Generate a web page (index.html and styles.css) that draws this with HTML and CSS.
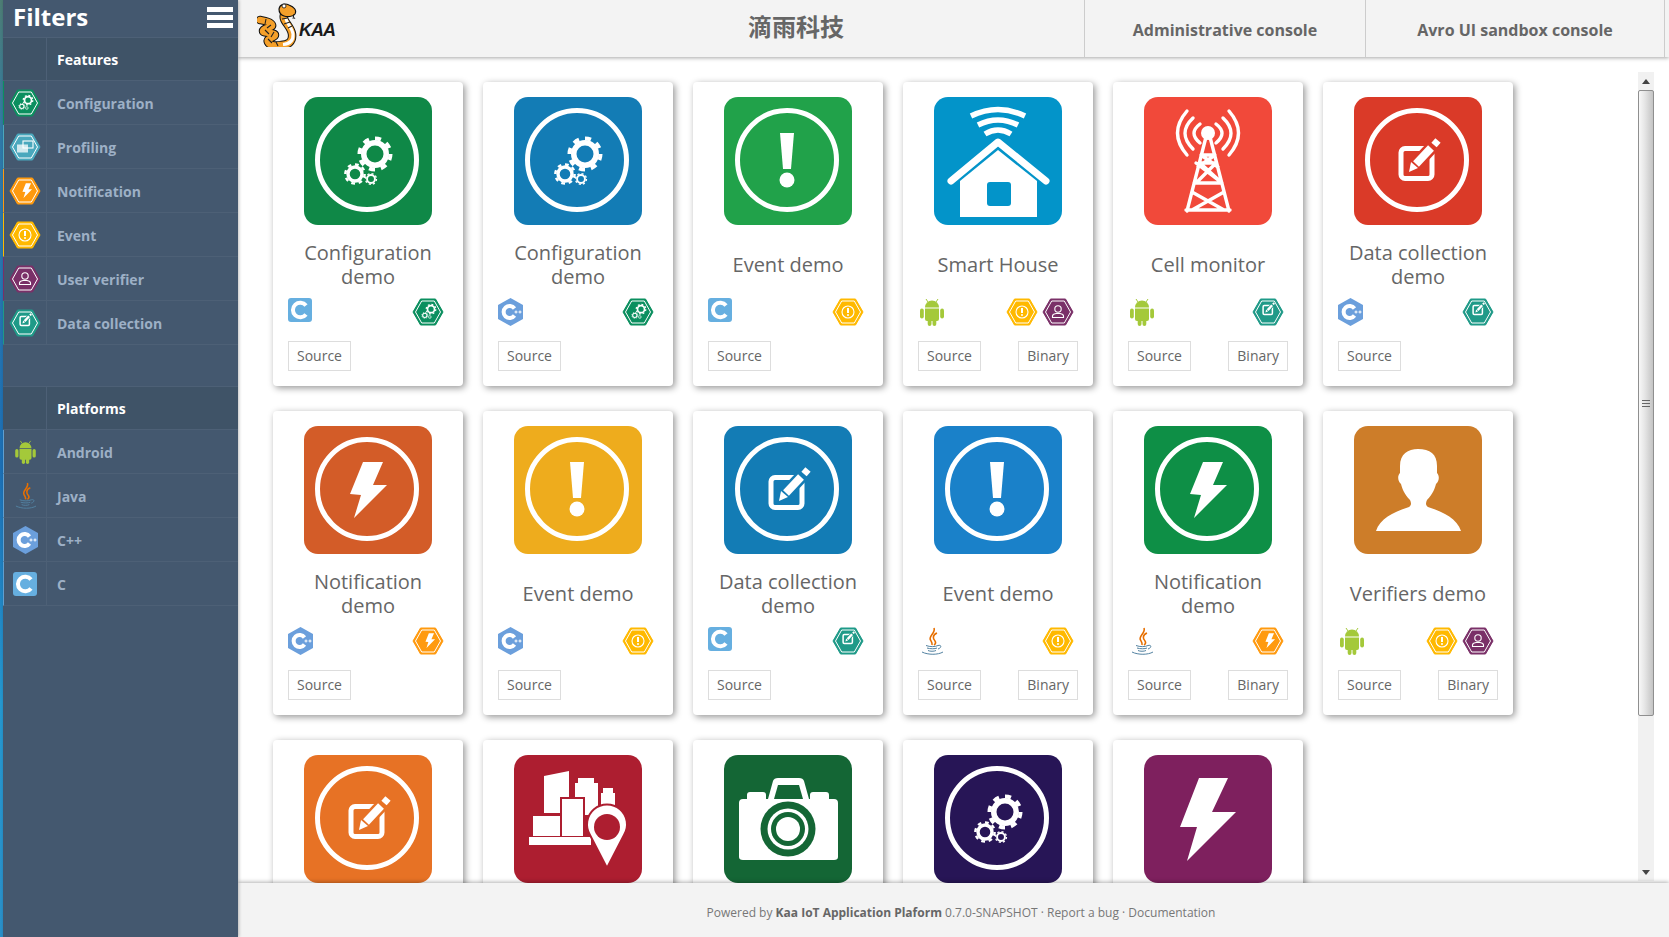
FILE: index.html
```html
<!DOCTYPE html>
<html lang="en">
<head>
<meta charset="utf-8">
<title>Kaa Sandbox</title>
<link rel="stylesheet" href="styles.css">
</head>
<body>
<svg class="defs" aria-hidden="true">
  <defs>
    <circle id="ring" class="st ring" cx="63" cy="63" r="49.500"/>
    <g id="gear">
      <circle class="st gear-body" r="11.250"/>
      <circle class="st gear-teeth" r="15.500" pathLength="16"/>
    </g>
    <g id="gears">
      <use href="#gear" transform="translate(71 57)"/>
      <use href="#gear" transform="translate(51 77) scale(.62)"/>
      <use href="#gear" transform="translate(67 82) scale(.35)"/>
    </g>
    <g id="edit">
      <rect class="st edit-box" x="47" y="51.500" width="31" height="30" rx="4"/>
      <path class="halo" d="M60 69 L80 48"/>
      <path class="st pencil" d="M62 67 L77 51"/>
      <path class="st pencil-end" d="M80 48 L84 43.500"/>
      <path class="fl" d="M55 75 L57 65 L64 71 Z"/>
    </g>
    <g id="bang">
      <path class="fl" d="M56 36 H70 L67 72 H59 Z"/>
      <circle class="fl" cx="63" cy="83" r="7.500"/>
    </g>
    <path id="bolt" class="fl" d="M59 36 H79 L69 59 H83 L50 92 L57 69 L46 68 Z"/>
    <path id="bigbolt" class="fl" d="M55 23 H84 L68 57 H92 L43 106 L53 72 H36 Z"/>
    <g id="house">
      <path class="st wave" d="M37 19 Q64 6 91 19"/>
      <path class="st wave" d="M44 28 Q64 18 84 28"/>
      <path class="st wave" d="M51 37 Q64 29 77 37"/>
      <path class="st roof" d="M17 84 L64 45 L112 84"/>
      <path class="fl" d="M26 120 V84 L64 53 L103 84 V120 Z"/>
      <rect class="cur" x="53" y="85" width="24" height="24" rx="3"/>
    </g>
    <g id="tower">
      <circle class="fl" cx="64" cy="36" r="7"/>
      <path class="st tower-line" d="M62 40 L43 114 M66 40 L85 114 M42 113 H86 M48 95 L80 113 M80 95 L48 113 M50 86 H78 L52 66 M78 86 L56 66 H72 L52 86 M57 58 H71 L54 70 M57 58 L74 70"/>
      <path class="st wave-thin" d="M43 14 Q24 36 43 58 M49 21 Q33 36 49 52 M56 27 Q44 36 56 46 M85 14 Q104 36 85 58 M79 21 Q95 36 79 52 M72 27 Q84 36 72 46"/>
    </g>
    <path id="person" class="fl" d="M22 105 C26 92 42 85 55 81 C58 79 57 76 56 74 C50 68 48 62 47 58 C44 56 43 50 46 47 L46 40 C46 28 54 23 64 23 C76 23 83 28 83 40 L83 47 C86 50 85 56 82 58 C81 62 79 68 73 74 C72 76 71 79 74 81 C87 85 103 92 107 105 Z"/>
    <g id="city">
      <path class="fl" d="M30 21 L55 16 V58 H30 Z"/>
      <path class="fl" d="M61 28 H64 V23 H80 V28 H84 V60 H61 Z"/>
      <path class="fl" d="M87 38 H89 V33 H99 V38 H101 V52 H87 Z"/>
      <rect class="fl front" x="47" y="43" width="23" height="39"/>
      <path class="fl" d="M19 61 H46 V81 H19 Z"/>
      <rect class="fl" x="15" y="82" width="62" height="8"/>
      <path class="fl pin" d="M93 113 L76 80 A20 20 0 1 1 110 80 Z"/>
      <circle class="cur" cx="93" cy="72" r="13"/>
    </g>
    <g id="camera">
      <path class="fl" d="M15 48 Q15 44 19 44 H23 V40 Q23 37 26 37 H39 Q42 37 42 40 V44 H44 L49 26 Q50 23 54 23 H75 Q79 23 80 26 L85 44 H86 V40 Q86 37 89 37 H102 Q105 37 105 40 V44 H110 Q114 44 114 48 V102 Q114 105 110 105 H19 Q15 105 15 102 Z"/>
      <path class="cur" d="M54 30 H75 L79 44 H50 Z"/>
      <circle class="cur" cx="64" cy="74" r="27.500"/>
      <circle class="fl" cx="64" cy="74" r="20.500"/>
      <circle class="cur" cx="64" cy="74" r="17"/>
      <circle class="fl" cx="64" cy="74" r="12"/>
    </g>

    <g id="hex-frame">
      <path class="cur hex-out" d="M1 14 L8.500 1 H23.500 L31 14 L23.500 27 H8.500 Z"/>
      <path class="st hex-in" d="M3.500 14 L9.700 3 H22.300 L28.500 14 L22.300 25 H9.700 Z"/>
    </g>
    <g id="hex-config">
      <use href="#hex-frame"/>
      <use href="#gears" transform="translate(-3 -6.500) scale(.31)"/>
    </g>
    <g id="hex-profile">
      <use href="#hex-frame"/>
      <rect class="fl dim" x="8" y="11.500" width="11" height="8"/>
      <rect class="st hex-line" x="14" y="8" width="10" height="7"/>
    </g>
    <g id="hex-notify">
      <use href="#hex-frame"/>
      <use href="#bolt" transform="translate(1.500 -3) scale(.26)"/>
    </g>
    <g id="hex-event">
      <use href="#hex-frame"/>
      <circle class="st hex-line" cx="16" cy="14" r="6"/>
      <path class="fl" d="M15 10 H17 V15 H15 Z"/>
      <circle class="fl" cx="16" cy="17" r="1"/>
    </g>
    <g id="hex-user">
      <use href="#hex-frame"/>
      <circle class="st hex-line" cx="16" cy="11" r="3.200"/>
      <path class="st hex-line" d="M10.500 19.500 V18 Q10.500 16 14 15.500 H18 Q21.500 16 21.500 18 V19.500 Z"/>
    </g>
    <g id="hex-data">
      <use href="#hex-frame"/>
      <use href="#edit" transform="translate(-3 -8) scale(.3)"/>
    </g>

    <g id="android">
      <path class="droid" d="M5 9.500 A7 7 0 0 1 19 9.500 Z"/>
      <path class="droid-line" d="M8 4 L6 1 M16 4 L18 1"/>
      <path class="droid" d="M5 10.500 H19 V21 Q19 23 17 23 H7 Q5 23 5 21 Z"/>
      <rect class="droid" x="0" y="10.500" width="3.800" height="10" rx="1.900"/>
      <rect class="droid" x="20.200" y="10.500" width="3.800" height="10" rx="1.900"/>
      <rect class="droid" x="7.700" y="21" width="3.800" height="7" rx="1.900"/>
      <rect class="droid" x="12.500" y="21" width="3.800" height="7" rx="1.900"/>
    </g>
    <g id="java">
      <path class="flame" d="M14 1 C16 6 8 9 10.500 13 C11.500 15 12.500 16 12 18"/>
      <path class="flame" d="M17 6 C12 8 13 12 15 14 C16 15.500 15.500 17 14 18"/>
      <path class="cup" d="M6 18.500 C10 20 15 20 18 18.500 M7 21 C10 22 15 22 17 21 M8 23.500 C10 24.500 14 24.500 16 23.500 M2 25 C8 28 18 28 23 25 M18 18.500 C22 17.500 21.500 21 18 22"/>
    </g>
    <g id="lang-c">
      <rect class="lang-c-bg" width="24" height="24" rx="3"/>
      <path class="st lang-stroke" d="M18 7.500 A7.300 7.300 0 1 0 18 16.500"/>
    </g>
    <g id="lang-cpp">
      <path class="lang-cpp-bg" d="M12.500 0 L25 7 V21 L12.500 28 L0 21 V7 Z"/>
      <path class="st lang-stroke" d="M16.500 10.500 A6 6 0 1 0 16.500 17.500"/>
      <path class="st plus" d="M16.500 14 H19.500 M18 12.500 V15.500 M20.500 14 H23.500 M22 12.500 V15.500"/>
    </g>
  </defs>
</svg>

<div class="app">
  <div class="strip"></div>
  <aside class="sidebar">
    <div class="filters-head">
      <span class="filters-title">Filters</span>
      <span class="burger"><i></i><i></i><i></i></span>
    </div>
    <div class="group-head"><span class="cell-icon"></span><span class="group-label">Features</span></div>
    <div class="row edge-config"><span class="cell-icon"><svg class="hex hue-config" viewBox="0 0 32 28"><use href="#hex-config"/></svg></span><span class="row-label">Configuration</span></div>
    <div class="row edge-profile"><span class="cell-icon"><svg class="hex hue-profile" viewBox="0 0 32 28"><use href="#hex-profile"/></svg></span><span class="row-label">Profiling</span></div>
    <div class="row edge-notify"><span class="cell-icon"><svg class="hex hue-notify" viewBox="0 0 32 28"><use href="#hex-notify"/></svg></span><span class="row-label">Notification</span></div>
    <div class="row edge-event"><span class="cell-icon"><svg class="hex hue-event" viewBox="0 0 32 28"><use href="#hex-event"/></svg></span><span class="row-label">Event</span></div>
    <div class="row edge-user"><span class="cell-icon"><svg class="hex hue-user" viewBox="0 0 32 28"><use href="#hex-user"/></svg></span><span class="row-label">User verifier</span></div>
    <div class="row edge-data"><span class="cell-icon"><svg class="hex hue-data" viewBox="0 0 32 28"><use href="#hex-data"/></svg></span><span class="row-label">Data collection</span></div>
    <div class="group-gap"></div>
    <div class="group-head"><span class="cell-icon"></span><span class="group-label">Platforms</span></div>
    <div class="row edge-android"><span class="cell-icon"><svg class="side-android" viewBox="0 0 24 28"><use href="#android"/></svg></span><span class="row-label">Android</span></div>
    <div class="row edge-java"><span class="cell-icon"><svg class="side-java" viewBox="0 0 24 28"><use href="#java"/></svg></span><span class="row-label">Java</span></div>
    <div class="row edge-cpp"><span class="cell-icon"><svg class="ic-cpp" viewBox="0 0 25 28"><use href="#lang-cpp"/></svg></span><span class="row-label">C++</span></div>
    <div class="row edge-c"><span class="cell-icon"><svg class="ic-c" viewBox="0 0 24 24"><use href="#lang-c"/></svg></span><span class="row-label">C</span></div>
  </aside>

  <div class="main">
    <header class="topbar">
      <div class="brand">
        <svg class="snake" viewBox="0 0 40 46">
          <path class="sn-o" d="M3 19 C8 20 14 21 15 24 C16 27 6 26 6 30 C6 33 18 31 18 34 C18 37 9 37 11 41 C13 45 20 45 24 44 C31 44 36 41 35 33 C34 25 25 20 27 14"/>
          <path class="sn-i" d="M3 19 C8 20 14 21 15 24 C16 27 6 26 6 30 C6 33 18 31 18 34 C18 37 9 37 11 41 C13 45 20 45 24 44 C31 44 36 41 35 33 C34 25 25 20 27 14"/>
          <path class="sn-b" d="M26 43.500 C32 43 36.500 40 36 33 C35 26 29 22 29 17"/>
          <path class="sn-s" d="M9 18 L8 23 M14 24 L10 27 M8 29 L12 33 M17 31 L14 36 M11 38 L15 42 M19 41 L21 45 M25 18 L31 17 M27 23 L33 21 M31 27 L35 25"/>
          <path class="sn-h" d="M22 8 C23 3 28 2 32 4 C37 6 40 9 38 13 C36 16 30 16 27 15 C24 14 22 12 22 8 Z"/>
          <circle class="sn-e" cx="27" cy="5" r="2"/>
          <path class="sn-t" d="M37 13 L36 18 M36 15 L38 18"/>
        </svg>
        <span class="kaa">KAA</span>
      </div>
      <div class="company">滴雨科技</div>
      <a class="nav nav-admin">Administrative console</a>
      <a class="nav nav-avro">Avro UI sandbox console</a>
    </header>

    <div class="pane">
      <div class="cards">

        <article class="card">
          <div class="tile t-forest"><svg class="tile-svg" viewBox="0 0 128 128"><use href="#ring"/><use href="#gears"/></svg></div>
          <h3 class="title">Configuration demo</h3>
          <div class="badges"><svg class="ic-c" viewBox="0 0 24 24"><use href="#lang-c"/></svg><span class="hexes"><svg class="hex hue-config" viewBox="0 0 32 28"><use href="#hex-config"/></svg></span></div>
          <div class="actions"><a class="btn">Source</a></div>
        </article>

        <article class="card">
          <div class="tile t-ocean"><svg class="tile-svg" viewBox="0 0 128 128"><use href="#ring"/><use href="#gears"/></svg></div>
          <h3 class="title">Configuration demo</h3>
          <div class="badges"><svg class="ic-cpp" viewBox="0 0 25 28"><use href="#lang-cpp"/></svg><span class="hexes"><svg class="hex hue-config" viewBox="0 0 32 28"><use href="#hex-config"/></svg></span></div>
          <div class="actions"><a class="btn">Source</a></div>
        </article>

        <article class="card">
          <div class="tile t-grass"><svg class="tile-svg" viewBox="0 0 128 128"><use href="#ring"/><use href="#bang"/></svg></div>
          <h3 class="title">Event demo</h3>
          <div class="badges"><svg class="ic-c" viewBox="0 0 24 24"><use href="#lang-c"/></svg><span class="hexes"><svg class="hex hue-event" viewBox="0 0 32 28"><use href="#hex-event"/></svg></span></div>
          <div class="actions"><a class="btn">Source</a></div>
        </article>

        <article class="card">
          <div class="tile t-sky"><svg class="tile-svg" viewBox="0 0 128 128"><use href="#house"/></svg></div>
          <h3 class="title">Smart House</h3>
          <div class="badges"><svg class="ic-android" viewBox="0 0 24 28"><use href="#android"/></svg><span class="hexes"><svg class="hex hue-event" viewBox="0 0 32 28"><use href="#hex-event"/></svg><svg class="hex hue-user" viewBox="0 0 32 28"><use href="#hex-user"/></svg></span></div>
          <div class="actions"><a class="btn">Source</a><a class="btn">Binary</a></div>
        </article>

        <article class="card">
          <div class="tile t-coral"><svg class="tile-svg" viewBox="0 0 128 128"><use href="#tower"/></svg></div>
          <h3 class="title">Cell monitor</h3>
          <div class="badges"><svg class="ic-android" viewBox="0 0 24 28"><use href="#android"/></svg><span class="hexes"><svg class="hex hue-data" viewBox="0 0 32 28"><use href="#hex-data"/></svg></span></div>
          <div class="actions"><a class="btn">Source</a><a class="btn">Binary</a></div>
        </article>

        <article class="card">
          <div class="tile t-red"><svg class="tile-svg" viewBox="0 0 128 128"><use href="#ring"/><use href="#edit"/></svg></div>
          <h3 class="title">Data collection demo</h3>
          <div class="badges"><svg class="ic-cpp" viewBox="0 0 25 28"><use href="#lang-cpp"/></svg><span class="hexes"><svg class="hex hue-data" viewBox="0 0 32 28"><use href="#hex-data"/></svg></span></div>
          <div class="actions"><a class="btn">Source</a></div>
        </article>

        <article class="card">
          <div class="tile t-rust"><svg class="tile-svg" viewBox="0 0 128 128"><use href="#ring"/><use href="#bolt"/></svg></div>
          <h3 class="title">Notification demo</h3>
          <div class="badges"><svg class="ic-cpp" viewBox="0 0 25 28"><use href="#lang-cpp"/></svg><span class="hexes"><svg class="hex hue-notify" viewBox="0 0 32 28"><use href="#hex-notify"/></svg></span></div>
          <div class="actions"><a class="btn">Source</a></div>
        </article>

        <article class="card">
          <div class="tile t-amber"><svg class="tile-svg" viewBox="0 0 128 128"><use href="#ring"/><use href="#bang"/></svg></div>
          <h3 class="title">Event demo</h3>
          <div class="badges"><svg class="ic-cpp" viewBox="0 0 25 28"><use href="#lang-cpp"/></svg><span class="hexes"><svg class="hex hue-event" viewBox="0 0 32 28"><use href="#hex-event"/></svg></span></div>
          <div class="actions"><a class="btn">Source</a></div>
        </article>

        <article class="card">
          <div class="tile t-ocean"><svg class="tile-svg" viewBox="0 0 128 128"><use href="#ring"/><use href="#edit"/></svg></div>
          <h3 class="title">Data collection demo</h3>
          <div class="badges"><svg class="ic-c" viewBox="0 0 24 24"><use href="#lang-c"/></svg><span class="hexes"><svg class="hex hue-data" viewBox="0 0 32 28"><use href="#hex-data"/></svg></span></div>
          <div class="actions"><a class="btn">Source</a></div>
        </article>

        <article class="card">
          <div class="tile t-azure"><svg class="tile-svg" viewBox="0 0 128 128"><use href="#ring"/><use href="#bang"/></svg></div>
          <h3 class="title">Event demo</h3>
          <div class="badges"><svg class="ic-java" viewBox="0 0 24 28"><use href="#java"/></svg><span class="hexes"><svg class="hex hue-event" viewBox="0 0 32 28"><use href="#hex-event"/></svg></span></div>
          <div class="actions"><a class="btn">Source</a><a class="btn">Binary</a></div>
        </article>

        <article class="card">
          <div class="tile t-emerald"><svg class="tile-svg" viewBox="0 0 128 128"><use href="#ring"/><use href="#bolt"/></svg></div>
          <h3 class="title">Notification demo</h3>
          <div class="badges"><svg class="ic-java" viewBox="0 0 24 28"><use href="#java"/></svg><span class="hexes"><svg class="hex hue-notify" viewBox="0 0 32 28"><use href="#hex-notify"/></svg></span></div>
          <div class="actions"><a class="btn">Source</a><a class="btn">Binary</a></div>
        </article>

        <article class="card">
          <div class="tile t-ochre"><svg class="tile-svg" viewBox="0 0 128 128"><use href="#person"/></svg></div>
          <h3 class="title">Verifiers demo</h3>
          <div class="badges"><svg class="ic-android" viewBox="0 0 24 28"><use href="#android"/></svg><span class="hexes"><svg class="hex hue-event" viewBox="0 0 32 28"><use href="#hex-event"/></svg><svg class="hex hue-user" viewBox="0 0 32 28"><use href="#hex-user"/></svg></span></div>
          <div class="actions"><a class="btn">Source</a><a class="btn">Binary</a></div>
        </article>

        <article class="card">
          <div class="tile t-orange"><svg class="tile-svg" viewBox="0 0 128 128"><use href="#ring"/><use href="#edit"/></svg></div>
        </article>
        <article class="card">
          <div class="tile t-crimson"><svg class="tile-svg" viewBox="0 0 128 128"><use href="#city"/></svg></div>
        </article>
        <article class="card">
          <div class="tile t-pine"><svg class="tile-svg" viewBox="0 0 128 128"><use href="#camera"/></svg></div>
        </article>
        <article class="card">
          <div class="tile t-indigo"><svg class="tile-svg" viewBox="0 0 128 128"><use href="#ring"/><use href="#gears"/></svg></div>
        </article>
        <article class="card">
          <div class="tile t-plum"><svg class="tile-svg" viewBox="0 0 128 128"><use href="#bigbolt"/></svg></div>
        </article>

      </div>
      <div class="scrollbar">
        <div class="sb-btn"><span class="arrow-up"></span></div>
        <div class="sb-thumb"><span class="grip"></span></div>
        <div class="sb-rest"></div>
        <div class="sb-btn"><span class="arrow-down"></span></div>
      </div>
    </div>

    <footer class="footer">
      <span>Powered by <b>Kaa IoT Application Plaform</b> 0.7.0-SNAPSHOT · Report a bug · Documentation</span>
    </footer>
  </div>
</div>
</body>
</html>
```

FILE: styles.css
```css
* { box-sizing: border-box; }
html, body { margin: 0; height: 100%; }
body {
  overflow: hidden;
  background: #fff;
  font-family: "Open Sans", "Noto Sans", sans-serif;
  color: #666;
}
.defs { display: none; }
svg { display: block; flex: none; }

/* svg paint helpers */
.st { fill: none; stroke: #fff; }
.fl { fill: #fff; }
.cur { fill: currentColor; }
.dim { opacity: .75; }
.ring { stroke-width: 5; }
.gear-body { stroke-width: 5.5; }
.gear-teeth { stroke-width: 4; stroke-dasharray: 1 1; }
.edit-box { stroke-width: 5; }
.halo { fill: none; stroke: currentColor; stroke-width: 13; }
.pencil { stroke-width: 8; }
.pencil-end { stroke-width: 7; }
.wave { stroke-width: 5.5; }
.roof { stroke-width: 7; stroke-linecap: round; stroke-linejoin: round; }
.tower-line { stroke-width: 3.4; stroke-linejoin: round; stroke-linecap: round; }
.wave-thin { stroke-width: 3.4; stroke-linecap: round; }
.pin { stroke: currentColor; stroke-width: 2; }
.front { stroke: currentColor; stroke-width: 2; }
.hex-out { stroke: currentColor; stroke-width: 1; }
.hex-in { stroke-width: 1; }
.hex-line { stroke-width: 1.1; }
.droid { fill: #a4c93a; }
.droid-line { fill: none; stroke: #a4c93a; stroke-width: 1; }
.flame { fill: none; stroke: #e76f00; stroke-width: 1.6; }
.cup { fill: none; stroke: #5382a1; stroke-width: 1; }
.lang-c-bg { fill: #66afe0; }
.lang-cpp-bg { fill: #6b9fdc; }
.lang-stroke { stroke-width: 4; }
.plus { stroke-width: 1; }

/* layout */
.app { display: flex; height: 937px; }
.strip {
  width: 3px;
  flex: none;
  background: linear-gradient(#4d7d74 0, #2f79a8 15%, #1c6fb5 50%, #2597cf 75%, #2a8fc8 100%);
}
.sidebar {
  width: 235px;
  flex: none;
  background: #44586f;
  position: relative;
  z-index: 3;
  box-shadow: 1px 0 3px rgba(0, 0, 0, .25);
}
.filters-head {
  height: 37px;
  display: flex;
  align-items: center;
  justify-content: space-between;
  padding: 0 5px 0 10px;
  background: #44586f;
}
.filters-title { font-size: 24px; font-weight: 700; color: #fff; line-height: 34px; margin-top: -3px; }
.burger { display: flex; flex-direction: column; gap: 3px; width: 26px; margin-top: -2px; }
.burger i { display: block; height: 5px; background: #fff; }
.group-head {
  height: 44px;
  display: flex;
  align-items: center;
  background: #3f5367;
  border-top: 1px solid #4d6076;
  border-bottom: 1px solid #4d6076;
}
.group-gap { height: 41px; }
.group-label { font-size: 14px; font-weight: 700; color: #fff; padding-left: 10px; }
.row {
  height: 44px;
  display: flex;
  align-items: center;
  border-bottom: 1px solid #4d6076;
  border-left: 1px solid transparent;
}
.cell-icon {
  width: 44px;
  height: 100%;
  flex: none;
  display: flex;
  align-items: center;
  justify-content: center;
  border-right: 1px solid #4d6076;
}
.row .cell-icon { width: 43px; }
.row-label { font-size: 14px; font-weight: 700; color: #9db0c6; padding: 2px 0 0 10px; }
.edge-config { border-left-color: #0b8f5f; }
.edge-profile { border-left-color: #4aa8bd; }
.edge-notify { border-left-color: #ff9a0f; }
.edge-event { border-left-color: #ffb900; }
.edge-user { border-left-color: #7a3068; }
.edge-data { border-left-color: #1f9a88; }
.edge-android, .edge-java, .edge-cpp, .edge-c { border-left-color: #5f9fd0; }

.hex { width: 32px; height: 28px; }
.hue-config { color: #0b8f5f; }
.hue-profile { color: #4aa8bd; }
.hue-notify { color: #ff9a0f; }
.hue-event { color: #ffb900; }
.hue-user { color: #7a3068; }
.hue-data { color: #1f9a88; }
.ic-c { width: 24px; height: 24px; }
.ic-cpp { width: 25px; height: 28px; }
.ic-android { width: 24px; height: 28px; margin-left: 2px; }
.ic-java { width: 24px; height: 28px; margin-left: 2px; }
.side-android { width: 21px; height: 24px; }
.side-java { width: 23px; height: 27px; }

.main { flex: 1; min-width: 0; display: flex; flex-direction: column; }
.topbar {
  height: 57px;
  flex: none;
  display: flex;
  align-items: stretch;
  background: #f3f3f3;
  position: relative;
  z-index: 2;
  box-shadow: 0 1px 4px rgba(0, 0, 0, .35);
  padding-right: 4px;
}
.brand { width: 270px; flex: none; display: flex; align-items: flex-start; padding: 1px 0 0 19px; }
.snake { width: 40px; height: 46px; }
.snake path, .snake circle { fill: none; }
.snake .sn-o { stroke: #111; stroke-width: 8.5; stroke-linecap: round; stroke-linejoin: round; }
.snake .sn-i { stroke: #f5a02a; stroke-width: 6.5; stroke-linecap: round; stroke-linejoin: round; }
.snake .sn-b { stroke: #fff; stroke-width: 3; }
.snake .sn-s { stroke: #222; stroke-width: 1.1; }
.snake .sn-h { fill: #f5a02a; stroke: #111; stroke-width: 1.2; }
.snake .sn-e { fill: #fff; stroke: #111; stroke-width: .8; }
.snake .sn-t { stroke: #111; stroke-width: .8; }
.kaa {
  font-family: "Liberation Sans", sans-serif;
  font-size: 18px;
  font-style: italic;
  font-weight: 700;
  color: #1a1a1a;
  margin: 19px 0 0 2px;
  line-height: 20px;
  letter-spacing: -1px;
}
.company {
  flex: 1;
  display: flex;
  align-items: center;
  justify-content: center;
  padding-bottom: 6px;
  font-family: "Noto Sans CJK SC", "Open Sans", sans-serif;
  font-size: 24px;
  font-weight: 700;
  color: #666;
}
.nav {
  display: flex;
  align-items: center;
  justify-content: center;
  flex: none;
  font-size: 16px;
  font-weight: 700;
  color: #666;
  border-left: 1px solid #ccc;
  padding-top: 3px;
}
.nav-admin { width: 281px; }
.nav-avro { width: 300px; border-right: 1px solid #ccc; }

.pane { flex: 1; min-height: 0; display: flex; overflow: hidden; }
.cards {
  flex: 1;
  min-width: 0;
  display: grid;
  grid-template-columns: repeat(6, 190px);
  grid-auto-rows: 304px;
  gap: 25px 20px;
  padding: 25px 0 0 35px;
  overflow: hidden;
}
.card {
  background: #fff;
  border-radius: 4px;
  box-shadow: 2px 2px 7px rgba(0, 0, 0, .42);
  padding: 15px;
  display: flex;
  flex-direction: column;
}
.tile {
  width: 128px;
  height: 128px;
  flex: none;
  margin: 0 auto;
  border-radius: 14px;
}
.tile-svg { width: 128px; height: 128px; }
.t-forest { background: #0f8847; color: #0f8847; }
.t-ocean { background: #137cb5; color: #137cb5; }
.t-grass { background: #21a24a; color: #21a24a; }
.t-sky { background: #0394c9; color: #0394c9; }
.t-coral { background: #f1493a; color: #f1493a; }
.t-red { background: #da3a28; color: #da3a28; }
.t-rust { background: #d35c28; color: #d35c28; }
.t-amber { background: #eeac1d; color: #eeac1d; }
.t-azure { background: #1a81c9; color: #1a81c9; }
.t-emerald { background: #0e8f46; color: #0e8f46; }
.t-ochre { background: #cd7d29; color: #cd7d29; }
.t-orange { background: #e77225; color: #e77225; }
.t-crimson { background: #ad1e30; color: #ad1e30; }
.t-pine { background: #146635; color: #146635; }
.t-indigo { background: #271556; color: #271556; }
.t-plum { background: #7e205e; color: #7e205e; }

.title {
  height: 48px;
  margin: 16px 0 0;
  flex: none;
  display: flex;
  align-items: center;
  justify-content: center;
  text-align: center;
  font-size: 20px;
  line-height: 24px;
  font-weight: 400;
  color: #666;
}
.badges {
  height: 28px;
  margin-top: 9px;
  flex: none;
  display: flex;
  align-items: flex-start;
  justify-content: space-between;
  padding-right: 4px;
}
.hexes { display: flex; gap: 4px; }
.actions {
  margin-top: 15px;
  flex: none;
  display: flex;
  justify-content: space-between;
}
.btn {
  height: 30px;
  padding: 0 8px 2px;
  display: flex;
  align-items: center;
  border: 1px solid #ddd;
  font-size: 14px;
  color: #666;
  background: #fff;
}

.scrollbar {
  width: 16px;
  flex: none;
  margin: 15px 15px 2px 0;
  display: flex;
  flex-direction: column;
  background: #f1f1f1;
}
.sb-btn { height: 18px; flex: none; display: flex; align-items: center; justify-content: center; }
.arrow-up { border: 4px solid transparent; border-top: 0; border-bottom: 5px solid #444; }
.arrow-down { border: 4px solid transparent; border-bottom: 0; border-top: 5px solid #444; }
.sb-thumb {
  height: 626px;
  flex: none;
  border: 1px solid #8f8f8f;
  border-radius: 2px;
  background: linear-gradient(90deg, #f8f8f8, #e6e6e6 40%, #c4c4c4);
  display: flex;
  align-items: center;
  justify-content: center;
}
.grip {
  width: 8px;
  height: 7px;
  background: repeating-linear-gradient(#666 0 1px, transparent 1px 3px);
}
.sb-rest { flex: 1; }

.footer {
  height: 54px;
  flex: none;
  display: flex;
  align-items: center;
  justify-content: center;
  padding: 4px 0 0 15px;
  background: #f3f3f3;
  box-shadow: 0 -1px 4px rgba(0, 0, 0, .3);
  position: relative;
  z-index: 2;
  font-size: 12px;
  color: #777;
}
.footer b { font-weight: 700; color: #666; }
```
